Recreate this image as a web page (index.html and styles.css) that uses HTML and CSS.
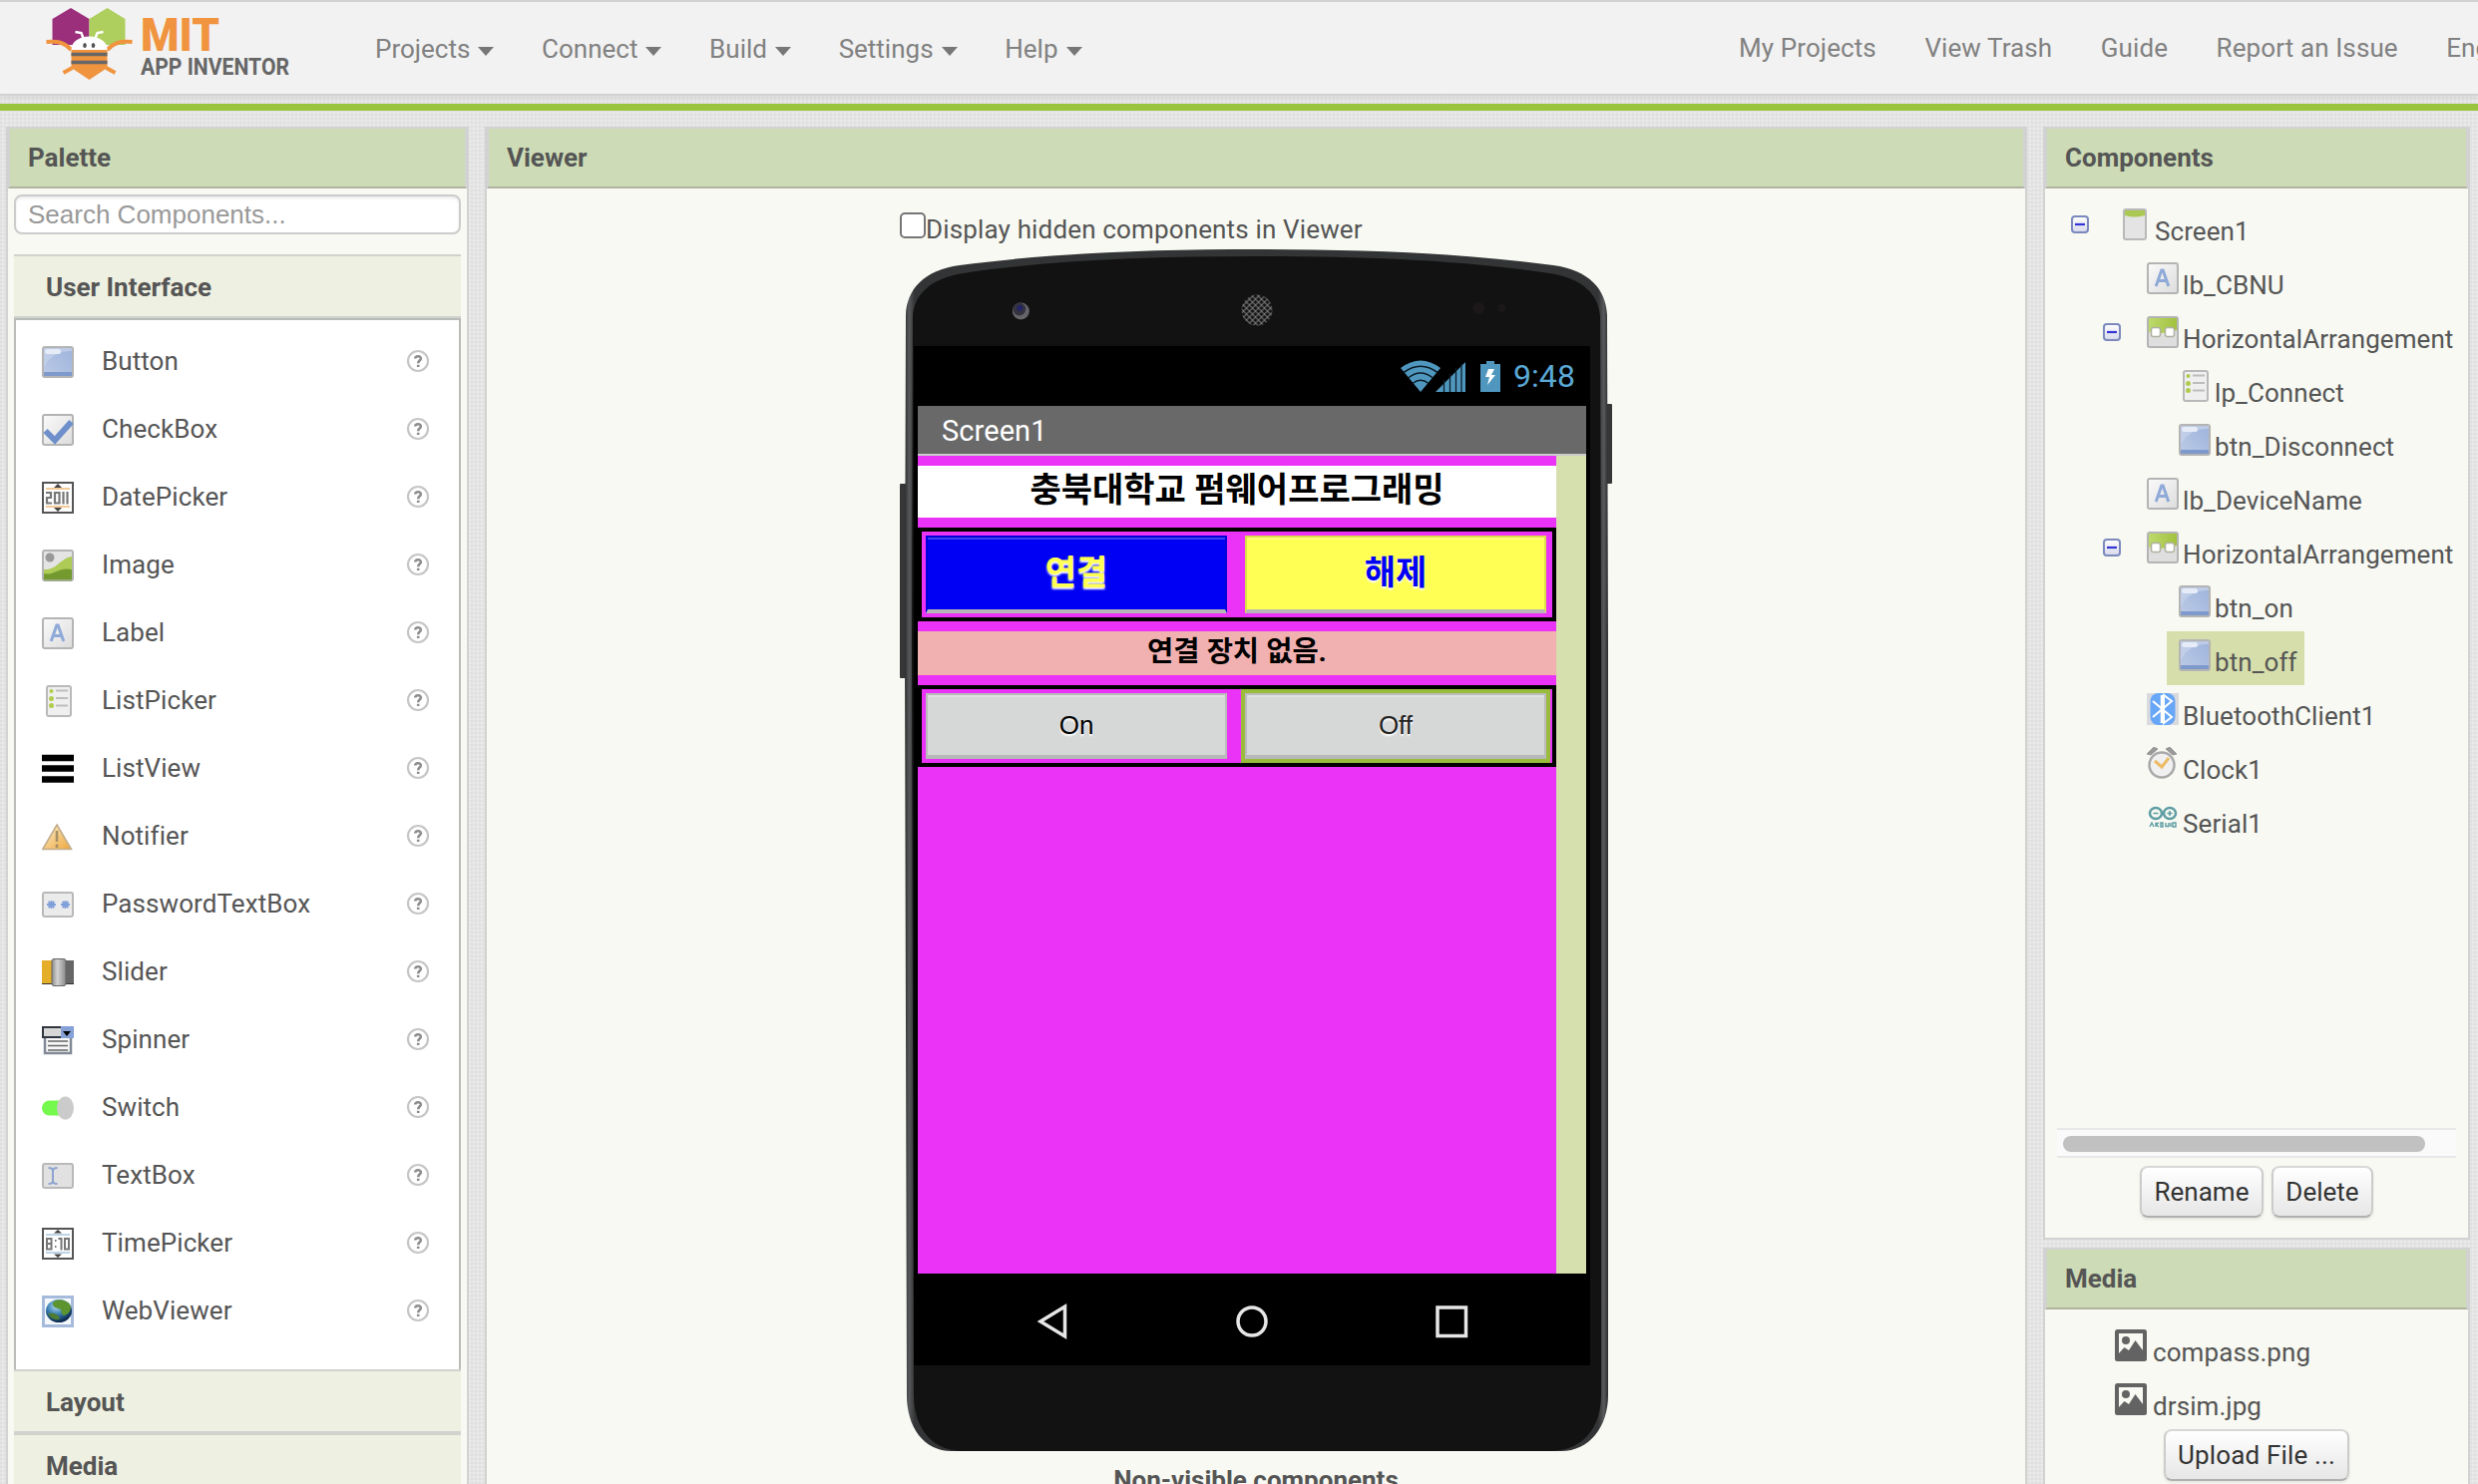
FILE: index.html
```html
<!DOCTYPE html>
<html lang="en">
<head>
<meta charset="utf-8">
<title>MIT App Inventor</title>
<link rel="stylesheet" href="styles.css">
</head>
<body>
<svg class="defs" width="0" height="0" aria-hidden="true">
  <defs>
    <linearGradient id="gBlue" x1="0" y1="1" x2="1" y2="0"><stop offset="0" stop-color="#bccbe6"/><stop offset="1" stop-color="#9db3dc"/></linearGradient>
    <linearGradient id="gGray" x1="0" y1="0" x2="1" y2="1"><stop offset="0" stop-color="#fafafa"/><stop offset="1" stop-color="#dcdcdc"/></linearGradient>
    <linearGradient id="gLime" x1="0" y1="0" x2="1" y2="0"><stop offset="0" stop-color="#bcd96c"/><stop offset="1" stop-color="#a3c23f"/></linearGradient>
    <linearGradient id="gAmber" x1="0" y1="0" x2="1" y2="1"><stop offset="0" stop-color="#fdf0d0"/><stop offset="1" stop-color="#eda638"/></linearGradient>
    <linearGradient id="gKnob" x1="0" y1="0" x2="1" y2="0"><stop offset="0" stop-color="#8c8c8c"/><stop offset=".4" stop-color="#d2d2d2"/><stop offset="1" stop-color="#8a8a8a"/></linearGradient>
    <radialGradient id="gGlobe" cx=".4" cy=".3" r=".7"><stop offset="0" stop-color="#b5dcf2"/><stop offset=".5" stop-color="#3a7fb5"/><stop offset="1" stop-color="#082548"/></radialGradient>
    <linearGradient id="gToggle" x1="0" y1="0" x2="0" y2="1"><stop offset="0" stop-color="#fff"/><stop offset="1" stop-color="#d5d8ea"/></linearGradient>
  </defs>
  <symbol id="button" viewBox="0 0 32 32">
    <rect x="1" y="1" width="30" height="30" rx="2" fill="url(#gBlue)" stroke="#b4b4b4" stroke-width="2"/>
    <path d="M2 2H30V5C16 5 7 11 3 20H2Z" fill="#c5d2ea" opacity=".75"/>
    <rect x="3" y="3" width="16" height="5" rx="2.5" fill="#e6ecf7"/>
    <rect x="2" y="26" width="28" height="4" fill="#7e99cb"/>
  </symbol>
  <symbol id="checkbox" viewBox="0 0 32 32">
    <rect x="1" y="1" width="30" height="30" rx="2" fill="url(#gGray)" stroke="#b4b4b4" stroke-width="2"/>
    <path d="M3.500 17L13 26.500L29.500 8" fill="none" stroke="#6e8fcb" stroke-width="6"/>
  </symbol>
  <symbol id="datepicker" viewBox="0 0 32 32">
    <rect x="1" y="1" width="30" height="30" fill="#fff" stroke="#555" stroke-width="2"/>
    <path d="M12 6L16 2L20 6ZM12 26L16 30L20 26Z" fill="#444"/>
    <path d="M4 7H28M4 25H28" stroke="#efb877" stroke-width="1.600"/>
    <path d="M4 11H9V16H5V21.500H10M13 11H17.500V21.500H13ZM21.500 10V22.500M25.500 10V22.500" fill="none" stroke="#777" stroke-width="2.200"/>
  </symbol>
  <symbol id="timepicker" viewBox="0 0 32 32">
    <rect x="1" y="1" width="30" height="30" fill="#fff" stroke="#555" stroke-width="2"/>
    <path d="M12 5.500L16 2L20 5.500ZM12 26.500L16 30L20 26.500Z" fill="#444"/>
    <path d="M4 7H28M4 25H28" stroke="#a9c6e0" stroke-width="1.600"/>
    <path d="M5 11H9.500V21.500H5ZM5 16H9.500M13 13H14.500M13 19H14.500M16.500 11H19.500V22.500M23 11H27V21.500H23Z" fill="none" stroke="#777" stroke-width="2"/>
  </symbol>
  <symbol id="image" viewBox="0 0 32 32">
    <rect x="1" y="1" width="30" height="30" rx="2" fill="#e4e4e4" stroke="#b4b4b4" stroke-width="2"/>
    <circle cx="8" cy="8" r="4.500" fill="#999"/>
    <path d="M2 20C15 21 18 9 30 7V30H2Z" fill="#adcb55"/>
    <path d="M2 24C11 27 17 17 30 20V30H2Z" fill="#73992f"/>
    <path d="M2 31H30" stroke="#9aa77f" stroke-width="1.500"/>
  </symbol>
  <symbol id="label" viewBox="0 0 32 32">
    <rect x="1" y="1" width="30" height="30" rx="2" fill="url(#gGray)" stroke="#b4b4b4" stroke-width="2"/>
    <path d="M9.200 24L14.800 8H16.200L21.800 24M11.500 18.500H19.500" fill="none" stroke="#8faad8" stroke-width="3"/>
  </symbol>
  <symbol id="listpicker" viewBox="0 0 32 32">
    <rect x="5" y="1" width="24" height="30" rx="2" fill="#efefef" stroke="#b9b9b9" stroke-width="2"/>
    <g fill="#b0cc4e"><circle cx="9.500" cy="6" r="2"/><circle cx="9.500" cy="13.500" r="2.500"/><circle cx="9.500" cy="20.500" r="2.500"/></g>
    <path d="M14 5.500H26M14 13H26M14 20.500H26" stroke="#bdbdbd" stroke-width="2"/>
  </symbol>
  <symbol id="listview" viewBox="0 0 32 32">
    <path d="M0 5H32M0 15.500H32M0 26.500H32" stroke="#000" stroke-width="6.500"/>
  </symbol>
  <symbol id="notifier" viewBox="0 0 32 32">
    <path d="M15 4L29.500 28.500H.8Z" fill="url(#gAmber)" stroke="#c2ad8d" stroke-width="1.600"/>
    <path d="M15 10V21M15 23.500V27" stroke="#a59066" stroke-width="2.600"/>
  </symbol>
  <symbol id="password" viewBox="0 0 32 32">
    <rect x="1" y="4" width="30" height="24" rx="2" fill="#ebebeb" stroke="#b9b9b9" stroke-width="2"/>
    <path d="M5 16H14M9.500 12V20M6.500 13L12.500 19M12.500 13L6.500 19M19 16H28M23.500 12V20M20.500 13L26.500 19M26.500 13L20.500 19" stroke="#7f9fda" stroke-width="1.800"/>
  </symbol>
  <symbol id="slider" viewBox="0 0 32 32">
    <rect x="0" y="4" width="12" height="24" fill="#e5ae28"/><rect x="20" y="4" width="12" height="24" fill="#666"/>
    <path d="M0 27.500H32" stroke="#333"/>
    <rect x="10" y="2.500" width="14" height="27" rx="2" fill="url(#gKnob)" stroke="#666"/>
  </symbol>
  <symbol id="spinner" viewBox="0 0 32 32">
    <rect x="1" y="3" width="30" height="10" fill="#d7d7d7" stroke="#30353e" stroke-width="2"/>
    <rect x="19" y="2" width="13" height="12" fill="#86a0d8"/><path d="M21 7H29L25 12Z" fill="#000"/>
    <path d="M3 14V29H29V14" fill="#f7f7f7" stroke="#828a96" stroke-width="2.500"/>
    <path d="M6 17H26M6 21.500H26M6 26H26" stroke="#666" stroke-width="1.600"/>
  </symbol>
  <symbol id="switch" viewBox="0 0 32 32">
    <rect x="0" y="8.500" width="28" height="15" rx="7.500" fill="#75f94d"/><ellipse cx="23.500" cy="16" rx="8.500" ry="11.500" fill="#cbcbcb"/>
  </symbol>
  <symbol id="textbox" viewBox="0 0 32 32">
    <rect x="1" y="4" width="30" height="24" rx="2" fill="#e1e1e1" stroke="#b9b9b9" stroke-width="2"/>
    <path d="M6.500 8C9 8 11 8.500 11 11V21C11 23.500 9 24 6.500 24M15.500 8C13 8 11 8.500 11 11M15.500 24C13 24 11 23.500 11 21" fill="none" stroke="#8ea4cf" stroke-width="2"/>
  </symbol>
  <symbol id="webviewer" viewBox="0 0 32 32">
    <rect x="1.500" y="1.500" width="29" height="29" fill="#f4f8fb" stroke="#a6bbdc" stroke-width="3"/>
    <ellipse cx="17" cy="15.500" rx="13" ry="11.500" fill="url(#gGlobe)"/>
    <path d="M12 6C18 3 27 5 29 11C29 15 27 19 22 20C17 17 22 14 16 13C12 12 9 9 12 6Z" fill="#5c9430"/><path d="M6 18C12 16 18 20 18 24C13 25 8 23 6 18Z" fill="#4d7d35"/>
  </symbol>
  <symbol id="screen" viewBox="0 0 32 32">
    <rect x="5" y="1" width="22" height="30" rx="2" fill="#e4e4e4" stroke="#b9b9b9" stroke-width="2"/>
    <path d="M6 2H26V7Q16 10 6 7Z" fill="#abc952"/>
  </symbol>
  <symbol id="harr" viewBox="0 0 32 32">
    <rect x="1" y="1" width="30" height="30" rx="2" fill="#dedede" stroke="#b4b4b4" stroke-width="2"/>
    <path d="M2 2H30V14Q16 19 2 16Z" fill="url(#gLime)"/>
    <rect x="4.500" y="11.500" width="9" height="9" rx="2" fill="#fff" stroke="#b0b0a0" stroke-width="1.500"/>
    <rect x="18.500" y="11.500" width="9" height="9" rx="2" fill="#fff" stroke="#b0b0a0" stroke-width="1.500"/>
  </symbol>
  <symbol id="bluetooth" viewBox="0 0 32 32">
    <rect width="32" height="32" fill="#d8dadd"/><rect x="3.500" y="0" width="25" height="32" rx="8" fill="#68a6f8"/>
    <path d="M6 8L25 24L17 30V2L25 8L6 24" fill="none" stroke="#fff" stroke-width="2"/><path d="M15.500 2V30" stroke="#fff" stroke-width="3.500"/>
  </symbol>
  <symbol id="clock" viewBox="0 0 32 32">
    <path d="M0 7L7 0L11 2L4 8ZM30 7L23 0L19 2L26 8Z" fill="#999" stroke="#999"/>
    <circle cx="15" cy="18" r="12.500" fill="#f0f0f0" stroke="#a9a9a9" stroke-width="2.500"/>
    <path d="M8 14L15 20L22 11" fill="none" stroke="#ecbc66" stroke-width="3"/>
  </symbol>
  <symbol id="serial" viewBox="0 0 32 32">
    <g fill="none" stroke="#5e9da3" stroke-width="2.500"><ellipse cx="9" cy="12.500" rx="6" ry="5.500"/><ellipse cx="23" cy="12.500" rx="6" ry="5.500"/><path d="M6.500 12.500H11.500M20.500 12.500H25.500M23 10V15" stroke-width="1.600"/><path d="M3 26L5 22L7 26M9 26V22.500H11L9.500 24L12 26M14 22V26H16V22ZM19 22V25.500H22V22M24 26V22M26 22H29V26H26Z" stroke-width="1.400"/></g>
  </symbol>
  <symbol id="picture" viewBox="0 0 32 32">
    <rect width="32" height="32" rx="2.500" fill="#636363"/><path d="M4 4H28V21L20.500 11L14 21L9.500 18L4 24Z" fill="#f7f9f2"/><circle cx="11" cy="11" r="4" fill="#636363"/>
  </symbol>
  <symbol id="help" viewBox="0 0 24 24">
    <circle cx="12" cy="12" r="10" fill="#fff" stroke="#c6c6c6" stroke-width="2.200"/>
    <path d="M9.200 9.500C9.400 6.300 15.200 6.500 14.800 9.700C14.500 11.600 12.200 11.600 12.200 14.200M12.200 15.800V18" fill="none" stroke="#8d8d8d" stroke-width="2.600"/>
  </symbol>
  <symbol id="minus" viewBox="0 0 18 18">
    <rect x="1" y="1" width="16" height="16" rx="3" fill="url(#gToggle)" stroke="#7d89bd" stroke-width="2"/><path d="M4 9H14" stroke="#3434d6" stroke-width="2.200"/>
  </symbol>
</svg>

<header class="topbar">
  <svg class="logo" width="260" height="92" viewBox="0 0 260 92">
    <g transform="translate(-1.500 0)">
      <path d="M11 19L29.500 8L48 19V45H11Z" fill="#9b2f7c"/>
      <path d="M48 19L66 8L84 19V45H48Z" fill="#aecf5e"/>
      <path d="M5 42C18 41 23 43 30 50M91 42C78 41 73 43 66 50" fill="none" stroke="#f0943f" stroke-width="4"/>
      <path d="M30 50C30 32 66 32 66 50Z" fill="#fff"/>
      <path d="M34 32L40 33L43 41M62 32L56 33L53 41" fill="none" stroke="#fff" stroke-width="2.500"/>
      <ellipse cx="43.500" cy="45.500" rx="1.800" ry="2.600" fill="#555"/><ellipse cx="52" cy="45.500" rx="1.800" ry="2.600" fill="#555"/>
      <path d="M30 50H66V68L48 80L30 68Z" fill="#f0943f"/>
      <path d="M30 54.500H66M30 62.500H66" stroke="#666" stroke-width="3.500"/>
      <path d="M31 68L22 73M65 68L74 73" stroke="#f0943f" stroke-width="4"/>
    </g>
    <text class="logo-mit" x="98" y="51" textLength="79" lengthAdjust="spacingAndGlyphs">MIT</text>
    <text class="logo-app" x="98" y="75" textLength="149" lengthAdjust="spacingAndGlyphs">APP INVENTOR</text>
  </svg>
  <nav class="menu">
    <span class="menu-item">Projects<i class="caret"></i></span>
    <span class="menu-item">Connect<i class="caret"></i></span>
    <span class="menu-item">Build<i class="caret"></i></span>
    <span class="menu-item">Settings<i class="caret"></i></span>
    <span class="menu-item">Help<i class="caret"></i></span>
  </nav>
  <nav class="links"><span>My Projects</span><span>View Trash</span><span>Guide</span><span>Report an Issue</span><span>English</span></nav>
</header>
<div class="stripe"></div>

<main class="workspace">
  <section class="panel palette">
    <h2 class="panel-title">Palette</h2>
    <div class="palette-body">
      <input class="search" type="text" placeholder="Search Components...">
      <div class="category">User Interface</div>
      <ul class="items">
        <li><svg><use href="#button"/></svg><span>Button</span><svg class="q"><use href="#help"/></svg></li>
        <li><svg><use href="#checkbox"/></svg><span>CheckBox</span><svg class="q"><use href="#help"/></svg></li>
        <li><svg><use href="#datepicker"/></svg><span>DatePicker</span><svg class="q"><use href="#help"/></svg></li>
        <li><svg><use href="#image"/></svg><span>Image</span><svg class="q"><use href="#help"/></svg></li>
        <li><svg><use href="#label"/></svg><span>Label</span><svg class="q"><use href="#help"/></svg></li>
        <li><svg><use href="#listpicker"/></svg><span>ListPicker</span><svg class="q"><use href="#help"/></svg></li>
        <li><svg><use href="#listview"/></svg><span>ListView</span><svg class="q"><use href="#help"/></svg></li>
        <li><svg><use href="#notifier"/></svg><span>Notifier</span><svg class="q"><use href="#help"/></svg></li>
        <li><svg><use href="#password"/></svg><span>PasswordTextBox</span><svg class="q"><use href="#help"/></svg></li>
        <li><svg><use href="#slider"/></svg><span>Slider</span><svg class="q"><use href="#help"/></svg></li>
        <li><svg><use href="#spinner"/></svg><span>Spinner</span><svg class="q"><use href="#help"/></svg></li>
        <li><svg><use href="#switch"/></svg><span>Switch</span><svg class="q"><use href="#help"/></svg></li>
        <li><svg><use href="#textbox"/></svg><span>TextBox</span><svg class="q"><use href="#help"/></svg></li>
        <li><svg><use href="#timepicker"/></svg><span>TimePicker</span><svg class="q"><use href="#help"/></svg></li>
        <li><svg><use href="#webviewer"/></svg><span>WebViewer</span><svg class="q"><use href="#help"/></svg></li>
      </ul>
      <div class="category">Layout</div>
      <div class="category">Media</div>
    </div>
  </section>

  <section class="panel viewer">
    <h2 class="panel-title">Viewer</h2>
    <label class="hidden-toggle"><span class="box"></span>Display hidden components in Viewer</label>
    <div class="phone">
      <svg class="shell" width="715" height="1206" viewBox="0 0 716 1206" preserveAspectRatio="none">
        <defs>
          <pattern id="mesh" width="6" height="6" patternUnits="userSpaceOnUse"><path d="M0 0L6 6M6 0L0 6" stroke="#777" stroke-width="1.100"/></pattern>
          <linearGradient id="rim" x1="0" y1="0" x2="1" y2="0"><stop offset="0" stop-color="#2c2c2e"/><stop offset=".006" stop-color="#58595b"/><stop offset=".014" stop-color="#333435"/><stop offset=".986" stop-color="#333435"/><stop offset=".994" stop-color="#58595b"/><stop offset="1" stop-color="#2c2c2e"/></linearGradient>
        </defs>
        <rect x="0" y="236" width="8" height="195" rx="1" fill="#363636"/>
        <rect x="707" y="156" width="8" height="80" rx="1" fill="#363636"/>
        <path d="M6 67C7 41 24 22 60 17C150 5 250 1 358 1S566 5 656 17C692 22 709 41 710 67L711 400V1150C711 1182 692 1206 664 1206H52C24 1206 7 1182 7 1150L5 400Z" fill="url(#rim)"/>
        <path d="M13 69C14 47 30 30 64 25C150 12 250 8 358 8S566 12 652 25C686 30 702 47 703 69L704 400V1150C704 1180 688 1206 652 1206H64C30 1206 14 1180 14 1150L12 400Z" fill="#121212"/>
        <circle cx="121.500" cy="63" r="8.500" fill="#66666a"/><circle cx="120" cy="61" r="6.500" fill="#34343e"/><circle cx="120.500" cy="60" r="3" fill="#232366"/>
        <circle cx="358.500" cy="62" r="15.500" fill="url(#mesh)"/>
        <circle cx="581" cy="60" r="6" fill="#1c1819"/><circle cx="604" cy="60" r="4" fill="#1c1819"/>
      </svg>
      <div class="display">
        <div class="status">
          <svg width="100" height="32" viewBox="0 0 100 32" fill="#5097bf">
            <path d="M20 32L0 8Q20 -7 40 8Z"/>
            <path d="M3 12.500Q20 0 37 12.500M7.500 18Q20 8 32.500 18M12 23.500Q20 17 28 23.500" fill="none" stroke="#0b1c26" stroke-width="1.600"/>
            <path d="M35 32L65 2V32Z"/><path d="M43.500 20V32M49.500 14V32M55.500 8V32M61 4V32" stroke="#0b1c26" stroke-width="1.300"/>
            <path d="M80 4H86V1H94V4H100V32H80Z"/><path d="M88 9H94L91 15H95L87 25L89 17H85Z" fill="#fff"/>
          </svg>
          <span>9:48</span>
        </div>
        <div class="titlebar">Screen1</div>
        <div class="app">
          <div class="form">
            <div class="lbl lbl-title">충북대학교 펌웨어프로그래밍</div>
            <div class="harr harr-tall"><div class="btn blue">연결</div><div class="btn yellow">해제</div></div>
            <div class="lbl lbl-device">연결 장치 없음.</div>
            <div class="harr"><div class="btn">On</div><div class="btn selected">Off</div></div>
          </div>
        </div>
        <div class="softkeys">
          <svg width="678" height="92" viewBox="0 0 678 92" fill="none" stroke="#e6e6e6" stroke-width="3.500">
            <path d="M127 48L151.500 33V63Z"/><circle cx="339" cy="48" r="14"/><rect x="525" y="34" width="28.500" height="28.500"/>
          </svg>
        </div>
      </div>
    </div>
    <div class="nonvisible">Non-visible components</div>
  </section>

  <div class="side">
    <section class="panel components">
      <h2 class="panel-title">Components</h2>
      <div class="tree">
        <div class="node root"><svg class="toggle"><use href="#minus"/></svg><svg><use href="#screen"/></svg><span>Screen1</span></div>
        <div class="node l1"><svg><use href="#label"/></svg><span>lb_CBNU</span></div>
        <div class="node l1 open"><svg class="toggle"><use href="#minus"/></svg><svg><use href="#harr"/></svg><span>HorizontalArrangement</span></div>
        <div class="node l2"><svg><use href="#listpicker"/></svg><span>lp_Connect</span></div>
        <div class="node l2"><svg><use href="#button"/></svg><span>btn_Disconnect</span></div>
        <div class="node l1"><svg><use href="#label"/></svg><span>lb_DeviceName</span></div>
        <div class="node l1 open"><svg class="toggle"><use href="#minus"/></svg><svg><use href="#harr"/></svg><span>HorizontalArrangement</span></div>
        <div class="node l2"><svg><use href="#button"/></svg><span>btn_on</span></div>
        <div class="node l2 current"><svg><use href="#button"/></svg><span>btn_off</span></div>
        <div class="node l1"><svg><use href="#bluetooth"/></svg><span>BluetoothClient1</span></div>
        <div class="node l1"><svg><use href="#clock"/></svg><span>Clock1</span></div>
        <div class="node l1"><svg><use href="#serial"/></svg><span>Serial1</span></div>
      </div>
      <div class="scrollbar"><div class="thumb"></div></div>
      <div class="actions"><button class="push w-rename">Rename</button><button class="push w-delete">Delete</button></div>
    </section>
    <section class="panel media">
      <h2 class="panel-title">Media</h2>
      <div class="files">
        <div class="node file"><svg><use href="#picture"/></svg><span>compass.png</span></div>
        <div class="node file"><svg><use href="#picture"/></svg><span>drsim.jpg</span></div>
      </div>
      <div class="upload"><button class="push w-upload">Upload File ...</button></div>
    </section>
  </div>
</main>
</body>
</html>
```
FILE: styles.css
```css
* { box-sizing: border-box; }

body {
  margin: 0;
  width: 2484px;
  height: 1488px;
  overflow: hidden;
  display: flex;
  flex-direction: column;
  font: 26px/30px Roboto, "Noto Sans CJK KR", sans-serif;
  letter-spacing: .08px;
  color: #555;
  background-color: #eaeaea;
  background-image:
    repeating-linear-gradient(0deg, rgba(0, 0, 0, .025) 0 2px, transparent 2px 4px),
    repeating-linear-gradient(90deg, rgba(0, 0, 0, .025) 0 2px, transparent 2px 4px);
}

.defs { position: absolute; }

/* top bar */
.topbar {
  flex: none;
  height: 96px;
  display: flex;
  border-top: 2px solid #d2d2d2;
  border-bottom: 2px solid #d2d2d2;
  background: #f2f2f2;
  color: #818181;
  white-space: nowrap;
  letter-spacing: 0;
  box-shadow: 0 2px 6px rgba(0, 0, 0, .08);
}
.logo { flex: none; margin: -2px 73px 0 43px; }
.logo-mit { font: 900 46px Roboto, sans-serif; fill: #f0943f; }
.logo-app { font: 700 24px Roboto, sans-serif; fill: #666; }
.menu { flex: none; display: flex; gap: 47.7px; width: 1367px; padding-top: 31px; }
.menu-item { display: flex; align-items: center; gap: 8px; height: 32px; }
.caret {
  margin-top: 4px;
  border: 8px solid transparent;
  border-top: 9px solid #777;
  border-bottom: 0;
}
.links { display: flex; gap: 48.500px; padding-top: 31px; letter-spacing: .1px; }
.stripe { flex: none; height: 7px; margin-top: 8px; background: #9bc43d; }

/* panels */
.workspace {
  flex: none;
  display: flex;
  gap: 16px;
  height: 1420px;
  padding: 16px 8px 0 6px;
}
.panel { border: 2px solid #d2d2d2; background: #f7f9f2; }
.panel-title {
  margin: 0;
  height: 60px;
  padding-left: 18px;
  border: 2px solid #d2d2d2;
  border-top: 0;
  border-bottom-color: #afb3a0;
  background: #cddcb6;
  font-size: 26px;
  font-weight: 700;
  letter-spacing: 0;
  line-height: 58px;
}
.palette { width: 464px; }
.viewer { width: 1546px; }
.side { display: flex; flex-direction: column; gap: 8px; width: 428px; }

/* palette */
.palette-body { padding: 6px 6px 0; }
.search {
  display: block;
  width: 448px;
  height: 40px;
  margin-bottom: 20px;
  padding: 0 12px;
  border: 2px solid #ccc;
  border-radius: 8px;
  background: #fff;
  box-shadow: inset 0 2px 3px rgba(0, 0, 0, .08);
  font: 26px "Liberation Sans", sans-serif;
}
.search::placeholder { color: #999; opacity: 1; }
.category {
  height: 64px;
  padding-left: 32px;
  border: solid #d0d2cd;
  border-width: 2px 0;
  background: #eef0e1;
  font-weight: 700;
  letter-spacing: 0;
  line-height: 62px;
}
.items {
  list-style: none;
  margin: 0;
  height: 1054px;
  padding: 7px 0 0 26px;
  border: 2px solid #b9bbb9;
  border-bottom: 0;
  background: #fff;
}
.items li { display: flex; align-items: center; height: 68px; }
.items svg { flex: none; width: 32px; height: 32px; margin-top: 2px; }
.items span { flex: none; width: 333px; padding-left: 28px; }
.items .q { width: 24px; height: 24px; margin: 0; }

/* viewer */
.hidden-toggle { display: flex; height: 60px; padding: 26px 0 0 414px; letter-spacing: .15px; }
.box {
  width: 26px;
  height: 26px;
  margin-top: -2px;
  border: 2px solid #767676;
  border-radius: 5px;
  background: #fff;
}
.phone { position: relative; width: 716px; height: 1206px; margin-left: 414px; padding: 98px 0 0 14px; }
.shell { position: absolute; left: 0; top: 0; }
.display { position: relative; width: 678px; height: 1022px; background: #000; }
.status {
  display: flex;
  align-items: center;
  justify-content: flex-end;
  gap: 13px;
  height: 60px;
  padding-right: 15px;
  color: #5aa9d6;
  font-size: 32px;
}
.titlebar {
  height: 50px;
  margin: 0 4px;
  padding-left: 24px;
  border-bottom: 2px solid #ccc;
  background: #696969;
  color: #fff;
  font-size: 29px;
  line-height: 50px;
}
.app { height: 820px; margin: 0 4px; padding-right: 30px; background: #d6dfae; }
.form { height: 820px; padding-top: 10px; background: #eb33f7; color: #000; letter-spacing: 0; }
.lbl { margin-bottom: 10px; text-align: center; font-weight: 700; }
.lbl-title { height: 52px; background: #fff; font-size: 34px; line-height: 48px; }
.lbl-device { height: 44px; background: #f2b1b1; font-size: 28.500px; line-height: 41px; }
.harr {
  display: flex;
  gap: 10px;
  height: 82px;
  margin-bottom: 10px;
  border: 4px solid #000;
}
.harr-tall { height: 94px; }
.btn {
  display: flex;
  align-items: center;
  justify-content: center;
  width: 302px;
  margin: 4px;
  border: 2px solid #bbb;
  border-bottom: 4px solid #b7b9b8;
  background: #d6d8d7;
  box-shadow: inset 0 2px 0 rgba(255, 255, 255, .25);
  font-family: "Liberation Sans", "Noto Sans CJK KR", sans-serif;
  text-shadow: 0 2px 2px #fff;
}
.btn.blue, .btn.yellow { padding-bottom: 2px; font-size: 34px; font-weight: 700; }
.btn.blue { background: #0000f5; border-color: #0000d8 #0000d8 #b7b7b7; color: #ffff54; }
.btn.yellow { background: #ffff54; border-color: #dede48 #dede48 #b7b7b7; color: #0000f5; }
.btn.selected { outline: 4px solid #9bbb3c; color: #222; }
.nonvisible { margin-top: 14px; text-align: center; font-weight: 700; letter-spacing: 0; }

/* tree */
.tree { height: 942px; padding-top: 12px; }
.node { display: flex; height: 54px; padding-top: 8px; line-height: 46px; white-space: nowrap; }
.node svg { flex: none; width: 32px; height: 32px; margin-right: 4px; }
.node .toggle { width: 18px; height: 18px; margin: 7px 26px 0 0; }
.root { padding-left: 26px; }
.root .toggle { margin-right: 30px; }
.l1 { padding-left: 102px; }
.open { padding-left: 58px; }
.l2 { padding-left: 134px; }
.current { width: 138px; margin-left: 122px; padding-left: 12px; background: #d6dfab; }
.scrollbar {
  width: 400px;
  height: 30px;
  margin-left: 12px;
  padding: 6px;
  border: solid #e8e8e8;
  border-width: 2px 0;
  background: #fafafa;
}
.thumb { width: 363px; height: 16px; border-radius: 8px; background: #c1c1c1; }
.actions { display: flex; justify-content: center; gap: 8px; padding-top: 8px; }
.push {
  height: 52px;
  padding: 0;
  border: 2px solid #ccc;
  border-color: #d8d8d8 #ccc #b0b0b0;
  border-radius: 8px;
  background: linear-gradient(#fff, #e6e6e6);
  box-shadow: 0 2px 3px rgba(0, 0, 0, .08);
  color: #333;
  font: 26px Roboto, sans-serif;
}
.w-rename { width: 124px; }
.w-delete { width: 102px; }
.w-upload { width: 186px; letter-spacing: .15px; }

.components { flex: none; height: 1116px; }
.media { flex: none; height: 280px; }
.files { padding-top: 12px; }
.file { padding-left: 70px; }
.node.file svg { margin-right: 6px; }
.upload { display: flex; justify-content: center; }
```
